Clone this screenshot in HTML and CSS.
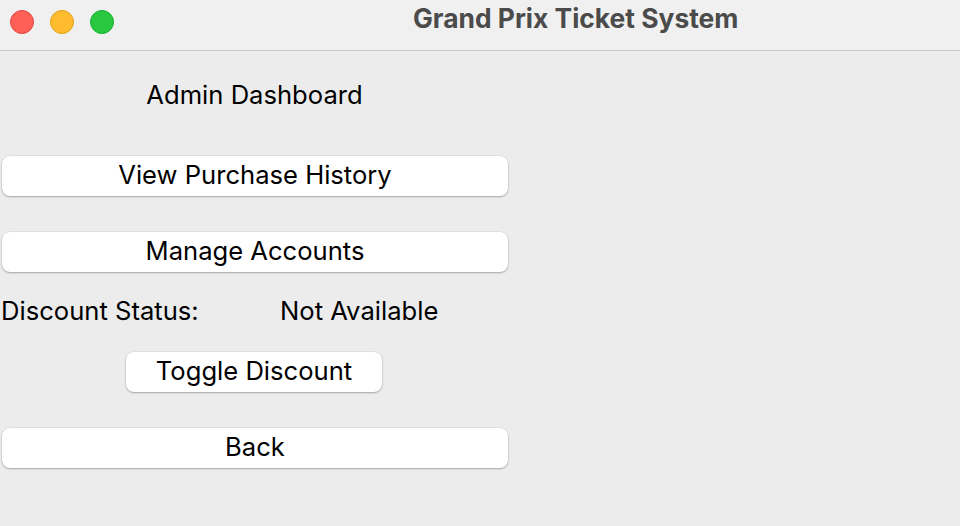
FILE: index.html
```html
<!DOCTYPE html>
<html>
<head>
<meta charset="utf-8">
<link rel="stylesheet" href="styles.css">
</head>
<body>
<div class="window">
  <header class="titlebar">
    <div class="lights">
      <span class="light red"></span>
      <span class="light yellow"></span>
      <span class="light green"></span>
    </div>
    <div class="title">Grand Prix Ticket System</div>
  </header>
  <main class="content">
    <div class="heading">Admin Dashboard</div>
    <button class="btn wide first">View Purchase History</button>
    <button class="btn wide second">Manage Accounts</button>
    <div class="status-row">
      <span class="status-label">Discount Status:</span>
      <span class="status-value">Not Available</span>
    </div>
    <button class="btn toggle">Toggle Discount</button>
    <button class="btn wide back">Back</button>
  </main>
</div>
</body>
</html>
```
FILE: styles.css
```css
* { box-sizing: border-box; }
html, body {
  margin: 0;
  padding: 0;
  width: 960px;
  height: 526px;
  overflow: hidden;
  background: #ececec;
  font-family: Inter, "Liberation Sans", sans-serif;
  color: #000;
}
.window {
  display: flex;
  flex-direction: column;
  height: 526px;
}
.titlebar {
  height: 51px;
  background: #f0f0f0;
  border-bottom: 1px solid #c8c8c8;
  display: flex;
  align-items: center;
  padding-left: 10px;
  padding-bottom: 7px;
}
.lights {
  display: flex;
  gap: 16px;
}
.light {
  width: 24px;
  height: 24px;
  border-radius: 50%;
  display: block;
}
.red { background: #fe5f57; border: 1px solid #e2463f; }
.yellow { background: #febc2e; border: 1px solid #e1a116; }
.green { background: #28c840; border: 1px solid #14ae2b; }
.title {
  margin-left: 299px;
  margin-bottom: 6px;
  font-size: 26.4px;
  font-weight: 700;
  color: #4b4b4b;
  line-height: 1;
}
.content {
  width: 510px;
  display: flex;
  flex-direction: column;
  align-items: center;
  font-size: 25.6px;
}
.heading {
  height: 40px;
  line-height: 40px;
  margin-top: 24px;
  margin-right: 1px;
}
.btn {
  font-family: inherit;
  font-size: 25.6px;
  color: #000;
  background: #fff;
  border: none;
  border-radius: 8px;
  height: 40px;
  padding: 0 0 3px 0;
  box-shadow: 0 0 0 0.5px rgba(0,0,0,0.08), 0 1px 2px rgba(0,0,0,0.28);
}
.wide { width: 506px; }
.first { margin-top: 41px; }
.second { margin-top: 36px; }
.status-row {
  margin-top: 19px;
  height: 40px;
  line-height: 40px;
  width: 510px;
  display: flex;
}
.status-label { width: 280px; padding-left: 1px; }
.toggle {
  width: 256px;
  margin-top: 21px;
  margin-right: 2px;
}
.back { margin-top: 36px; }
```
